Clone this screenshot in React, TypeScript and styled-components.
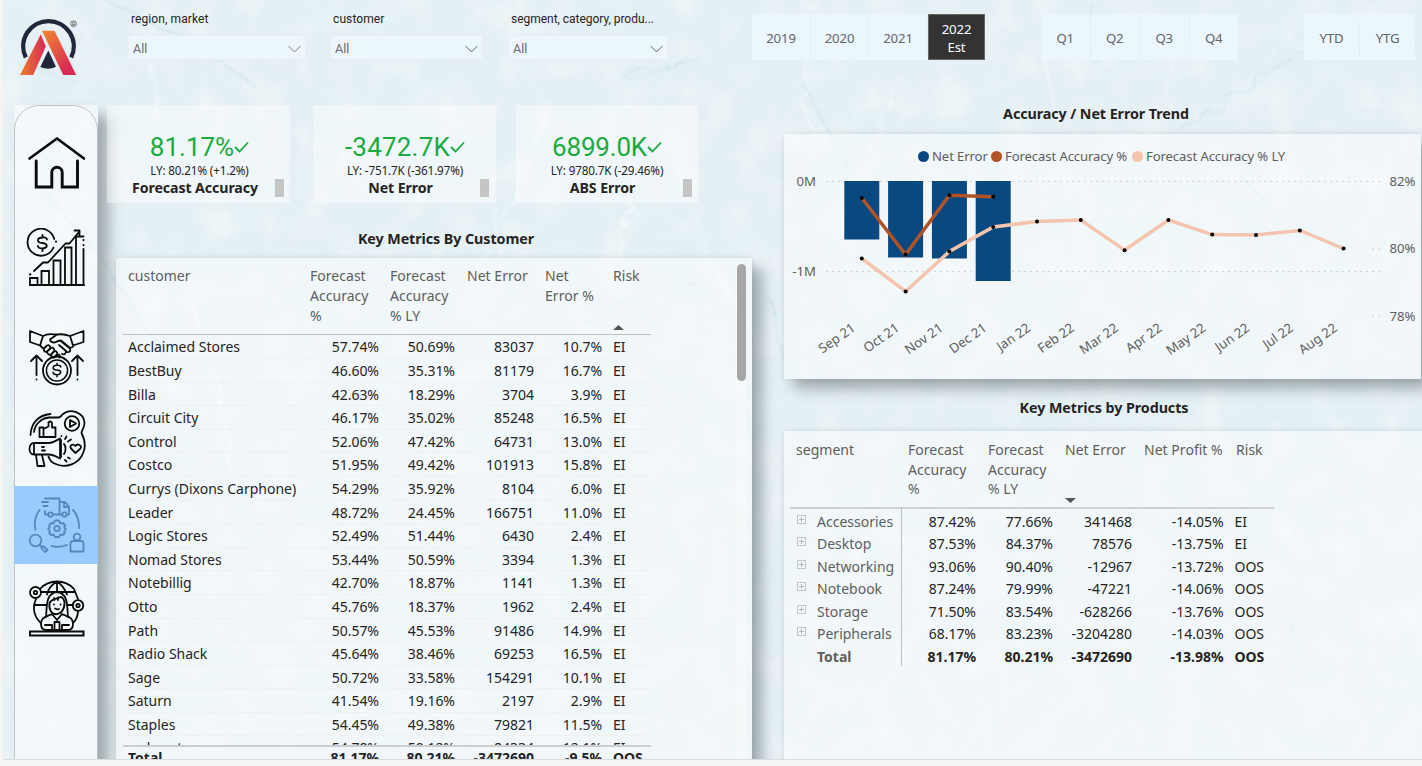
import React from "react";
import styled, { createGlobalStyle } from "styled-components";

const Global = createGlobalStyle`
  * { box-sizing: border-box; }
  body { margin: 0; background: #f3f3f3; }
`;

const UI = '"Noto Sans", "Open Sans", sans-serif';
const DIN = 'Roboto, "Liberation Sans", sans-serif';

const Page = styled.div`
  width: 1422px;
  height: 766px;
  overflow: hidden;
  background: #f4f4f4;
  font-family: ${UI};
  color: #252423;
`;
const Report = styled.div`
  position: relative;
  display: flex;
  width: 1419px;
  height: 760px;
  margin-left: 3px;
  overflow: hidden;
  background: #e5f0f4;
  border-bottom: 1px solid #dcdcdc;
`;
const Texture = styled.svg`
  position: absolute;
  inset: 0;
`;
const Rail = styled.div`
  position: relative;
  width: 95px;
  padding-left: 11px;
`;
const LogoBox = styled.div`
  height: 105px;
  padding-top: 14px;
`;
const Nav = styled.nav`
  position: relative;
  width: 84px;
  height: 655px;
  padding-top: 28px;
  background: rgba(255, 255, 255, 0.5);
  box-shadow: 11px 11px 13px rgba(40, 50, 55, 0.36);
  &::before {
    content: "";
    position: absolute;
    inset: 0 0 -40px 0;
    border: 1px solid #bfc3c6;
    border-radius: 25px;
    pointer-events: none;
  }
`;
const NavItem = styled.div<{ $gap?: number; $on?: boolean }>`
  position: relative;
  display: flex;
  justify-content: center;
  padding: ${(p) => (p.$on ? 9 : 0)}px 0;
  margin-top: ${(p) => p.$gap ?? 0}px;
  background: ${(p) => (p.$on ? "#99cbff" : "transparent")};
  svg { display: block; fill: none; stroke: ${(p) => (p.$on ? "#5389bf" : "#0b0b0b")}; stroke-width: 1.8; }
`;
const Middle = styled.div`
  position: relative;
  width: 654px;
  padding-left: 9px;
`;
const Right = styled.div`
  position: relative;
  width: 670px;
`;
const Slicers = styled.div`
  display: flex;
  height: 105px;
  padding: 12px 0 0 21px;
`;
const Slicer = styled.div<{ $w: number; $gap: number }>`
  width: ${(p) => p.$w}px;
  margin-right: ${(p) => p.$gap}px;
`;
const SlicerLabel = styled.div<{ $ls?: number }>`
  height: 23px;
  padding-left: 3px;
  font: 12px/14px ${DIN};
  letter-spacing: ${(p) => p.$ls ?? 0.1}px;
  white-space: nowrap;
`;
const Select = styled.div`
  display: flex;
  align-items: center;
  justify-content: space-between;
  height: 25px;
  padding: 2px 4px 0 4px;
  background: #ebf6fd;
  border: 1px solid #e9edf0;
  font: 12.6px/15px ${DIN};
  color: #6c6c6c;
`;
const Cards = styled.div`
  display: flex;
  height: 98px;
`;
const Card = styled.div<{ $w: number; $gap?: number }>`
  position: relative;
  width: ${(p) => p.$w}px;
  height: 98px;
  margin-right: ${(p) => p.$gap ?? 0}px;
  background: rgba(255, 255, 255, 0.42);
`;
const CardBody = styled.div<{ $w: number }>`
  display: flex;
  flex-direction: column;
  align-items: center;
  width: ${(p) => p.$w}px;
  padding-top: 26px;
  white-space: nowrap;
`;
const Value = styled.div<{ $ls?: number }>`
  display: flex;
  align-items: center;
  height: 32px;
  font: 26px/32px ${DIN};
  letter-spacing: ${(p) => p.$ls ?? 0}px;
  color: #1aab40;
`;
const Compare = styled.div`
  font-size: 11.7px;
  line-height: 15px;
  letter-spacing: -0.15px;
`;
const CardName = styled.div`
  margin-left: -9px;
  font-size: 14.2px;
  line-height: 20px;
  font-weight: 700;
  letter-spacing: -0.1px;
`;
const Thumb = styled.i<{ $x: number }>`
  position: absolute;
  left: ${(p) => p.$x}px;
  top: 74px;
  width: 9px;
  height: 18px;
  background: #c5c5c5;
`;
const Heading = styled.h2<{ $h: number; $pad: number; $c: number }>`
  margin: 0;
  width: ${(p) => p.$c * 2}px;
  height: ${(p) => p.$h}px;
  padding-top: ${(p) => p.$pad}px;
  text-align: center;
  font-size: 14.3px;
  line-height: 20px;
  font-weight: 700;
  letter-spacing: -0.07px;
`;
const Panel = styled.section<{ $w: number; $h: number }>`
  position: relative;
  width: ${(p) => p.$w}px;
  height: ${(p) => p.$h}px;
  background: rgba(255, 255, 255, 0.46);
  box-shadow: 10px 10px 13px rgba(40, 50, 55, 0.36), 0 0 5px rgba(60, 80, 90, 0.12);
`;
const CustomerPanel = styled(Panel)`
  margin-left: 9px;
  padding-left: 7px;
  overflow: visible;
`;
const Row = styled.div<{ $cols: string; $h: number; $bold?: boolean }>`
  display: grid;
  grid-template-columns: ${(p) => p.$cols};
  height: ${(p) => p.$h}px;
  line-height: ${(p) => p.$h}px;
  font-size: 14px;
  font-weight: ${(p) => (p.$bold ? 700 : 400)};
  white-space: nowrap;
`;
const CustRow = styled(Row)`
  width: 528px;
  padding-left: 5px;
  border-bottom: 1px solid #f1efef;
`;
const CustHead = styled(Row)`
  width: 528px;
  height: 77px;
  padding: 8px 0 0 5px;
  line-height: 20px;
  color: #605e5c;
  border-bottom: 1px solid #c4bebd;
`;
const CustBody = styled.div`
  height: 410px;
  padding-top: 0.4px;
  overflow: hidden;
`;
const CustTotal = styled(CustRow)`
  line-height: 21px;
  border-top: 2px solid #cbcdce;
  border-bottom: 0;
  overflow: hidden;
`;
const Num = styled.span`
  text-align: right;
  letter-spacing: -0.02px;
`;
const Name = styled.span`
  letter-spacing: 0;
`;
const RiskCell = styled.span`
  padding-left: 11px;
  letter-spacing: -0.05px;
`;
const HeadCell = styled.span<{ $indent?: number }>`
  position: relative;
  padding-left: ${(p) => p.$indent ?? 0}px;
  letter-spacing: 0.03px;
  white-space: pre;
`;
const SortMark = styled.svg<{ $top: number }>`
  position: absolute;
  left: 0;
  top: ${(p) => p.$top}px;
  fill: #555;
`;
const ScrollTrack = styled.div`
  position: absolute;
  left: 620px;
  top: 5px;
  width: 10px;
  height: 500px;
  background: rgba(255, 255, 255, 0.25);
  &::before {
    content: "";
    display: block;
    width: 9px;
    height: 117px;
    margin: 1px 0 0 1px;
    border-radius: 5px;
    background: #a6a6a6;
  }
`;
const Periods = styled.div`
  display: flex;
  height: 99px;
  padding-top: 14px;
`;
const PeriodGroup = styled.div<{ $gap?: number }>`
  display: flex;
  gap: 1px;
  margin-left: ${(p) => p.$gap ?? 0}px;
`;
const Period = styled.div<{ $w: number; $on?: boolean }>`
  display: flex;
  align-items: center;
  justify-content: center;
  width: ${(p) => p.$w}px;
  height: 46px;
  padding-top: 1px;
  text-align: center;
  font-size: 13.2px;
  line-height: 18px;
  letter-spacing: -0.15px;
  white-space: pre;
  color: ${(p) => (p.$on ? "#fff" : "#666")};
  background: ${(p) => (p.$on ? "#333" : "#ebf6fd")};
  border: ${(p) => (p.$on ? "1px solid #666" : "0")};
`;
const RightPanel = styled(Panel)`
  margin-left: 32px;
`;
const Legend = styled.div`
  display: flex;
  align-items: center;
  gap: 4px;
  height: 36px;
  padding: 8px 0 0 134px;
  font-size: 13.1px;
  letter-spacing: -0.1px;
  color: #605e5c;
  white-space: nowrap;
`;
const LegendItem = styled.span<{ $color: string; $w: number }>`
  display: flex;
  align-items: center;
  gap: 3px;
  width: ${(p) => p.$w}px;
  &::before {
    content: "";
    flex: none;
    width: 11px;
    height: 11px;
    border-radius: 50%;
    background: ${(p) => p.$color};
  }
`;
const Plot = styled.svg`
  display: block;
  font-family: ${UI};
  font-size: 13.2px;
  fill: #605e5c;
`;
const ProdPanel = styled(RightPanel)`
  padding-left: 6px;
`;
const ProdHead = styled(Row)`
  width: 484px;
  height: 78px;
  padding-top: 9px;
  line-height: 19.5px;
  color: #605e5c;
  border-bottom: 2px solid #cfd0d0;
`;
const ProdBody = styled.div`
  position: relative;
  width: 484px;
  padding-top: 1.6px;
  &::before {
    content: "";
    position: absolute;
    left: 111px;
    top: -1px;
    width: 1px;
    height: 158px;
    background: #bfc0c0;
  }
`;
const SegCell = styled.span`
  display: flex;
  gap: 11px;
  padding-left: 7px;
  color: #605e5c;
`;
const Expand = styled.i<{ $hide?: boolean }>`
  position: relative;
  width: 9px;
  height: 9px;
  margin-top: 4px;
  visibility: ${(p) => (p.$hide ? "hidden" : "visible")};
  border: 1px solid #c2c5c7;
  &::before, &::after {
    content: "";
    position: absolute;
    background: #b4b7b9;
  }
  &::before { left: 1px; top: 3px; width: 5px; height: 1px; }
  &::after { left: 3px; top: 1px; width: 1px; height: 5px; }
`;

const CUST_COLS = "178px 73px 76px 79px 68px 1fr";
const CUST_HEAD_COLS = "182px 80px 77px 78px 68px 1fr";
const customers = `Acclaimed Stores|57.74%|50.69%|83037|10.7%
BestBuy|46.60%|35.31%|81179|16.7%
Billa|42.63%|18.29%|3704|3.9%
Circuit City|46.17%|35.02%|85248|16.5%
Control|52.06%|47.42%|64731|13.0%
Costco|51.95%|49.42%|101913|15.8%
Currys (Dixons Carphone)|54.29%|35.92%|8104|6.0%
Leader|48.72%|24.45%|166751|11.0%
Logic Stores|52.49%|51.44%|6430|2.4%
Nomad Stores|53.44%|50.59%|3394|1.3%
Notebillig|42.70%|18.87%|1141|1.3%
Otto|45.76%|18.37%|1962|2.4%
Path|50.57%|45.53%|91486|14.9%
Radio Shack|45.64%|38.46%|69253|16.5%
Sage|50.72%|33.58%|154291|10.1%
Saturn|41.54%|19.16%|2197|2.9%
Staples|54.45%|49.38%|79821|11.5%
walmart|54.78%|50.12%|84334|12.1%`
  .split("\n")
  .map((l) => l.split("|"));

const PROD_COLS = "112px 74px 77px 79px 91.5px 1fr";
const PROD_HEAD_COLS = "118px 80px 77px 79px 92px 1fr";
const products = [
  ["Accessories", "87.42%", "77.66%", "341468", "-14.05%", "EI"],
  ["Desktop", "87.53%", "84.37%", "78576", "-13.75%", "EI"],
  ["Networking", "93.06%", "90.40%", "-12967", "-13.72%", "OOS"],
  ["Notebook", "87.24%", "79.99%", "-47221", "-14.06%", "OOS"],
  ["Storage", "71.50%", "83.54%", "-628266", "-13.76%", "OOS"],
  ["Peripherals", "68.17%", "83.23%", "-3204280", "-14.03%", "OOS"],
  ["Total", "81.17%", "80.21%", "-3472690", "-13.98%", "OOS"],
];

const months = ["Sep 21", "Oct 21", "Nov 21", "Dec 21", "Jan 22", "Feb 22", "Mar 22", "Apr 22", "May 22", "Jun 22", "Jul 22", "Aug 22"];
const lastYear = [258.5, 291.5, 251.5, 227, 221.5, 220, 250.2, 220, 234.6, 235, 230.5, 248.5];
const accuracy = [198, 254.5, 195.2, 196.7];
const bars = [239.5, 257.5, 258.5, 281];
const px = (i: number) => 861.8 + i * 43.8;
const line = (v: number[]) => v.map((y, i) => `${px(i)},${y}`).join(" ");

const Chevron = ({ color = "#666" }: { color?: string }) => (
  <svg width="13" height="8" viewBox="0 0 13 8" fill="none" stroke={color} strokeWidth="1">
    <path d="M.500 1l6 6 6-6" />
  </svg>
);
const Check = () => (
  <svg width="15" height="14" viewBox="0 0 15 14" fill="none" stroke="#1aab40" strokeWidth="1.8">
    <path d="M1 7l4.500 4.500L14 2.500" />
  </svg>
);

const Ice = () => (
  <Texture width="1419" height="760" viewBox="3 0 1419 760">
    <defs>
      <filter id="frost" x="0" y="0" width="100%" height="100%">
        <feTurbulence type="fractalNoise" baseFrequency="0.009 0.011" numOctaves="7" seed="11" />
        <feColorMatrix values="0 0 0 0 0.74  0 0 0 0 0.87  0 0 0 0 0.91  1.7 0 0 0 -0.72" />
      </filter>
      <filter id="snow" x="0" y="0" width="100%" height="100%">
        <feTurbulence type="fractalNoise" baseFrequency="0.03 0.025" numOctaves="5" seed="4" />
        <feColorMatrix values="0 0 0 0 1  0 0 0 0 1  0 0 0 0 1  0 2 0 0 -0.9" />
      </filter>
      <filter id="soft" x="-5%" y="-5%" width="110%" height="110%">
        <feTurbulence type="fractalNoise" baseFrequency="0.04" numOctaves="3" seed="8" result="n" />
        <feDisplacementMap in="SourceGraphic" in2="n" scale="18" />
        <feGaussianBlur stdDeviation="0.8" />
      </filter>
    </defs>
    <rect x="3" width="1419" height="760" filter="url(#frost)" opacity="0.6" />
    <rect x="3" width="1419" height="760" filter="url(#snow)" opacity="0.4" />
    <g fill="none" filter="url(#soft)">
      <path
        stroke="#fff" strokeOpacity="0.55" strokeWidth="1.4"
        d="M150 62l14 62 22 50M548 100l-38 118-14 50M640 110l-22 160M795 20l14 40-9 44 14 30M1042 44l16 82M1172 30l-8 92M903 75l-37 84M700 240l60 110M1262 60l30-26M190 300l30 90 10 80M500 210l-52 150"
      />
      <path
        stroke="#b0d6e4" strokeOpacity="0.5" strokeWidth="1.2"
        d="M18 65l60 16M106 0l90 44 60 43M620 78l75-20M800 80l50 90M1080 38l14 22M1180 128l54-32 62-42 50 4M1090 2l5 20M30 175l70 80 50 80 38 52M580 320l126-44M1240 176l30 30M1290 620l8 24M770 300l14 60"
      />
    </g>
  </Texture>
);

const Logo = () => (
  <svg width="64" height="66" viewBox="14 14 64 66">
    <defs>
      <linearGradient id="legL" x1="0" x2="1">
        <stop offset="0.15" stopColor="#ea7431" />
        <stop offset="0.9" stopColor="#d92f52" />
      </linearGradient>
      <linearGradient id="legR" x1="0" y1="0" x2="0.8" y2="1">
        <stop offset="0.1" stopColor="#ee7f33" />
        <stop offset="0.9" stopColor="#d92a55" />
      </linearGradient>
    </defs>
    <path d="M25.800 57.500A25.300 25.300 0 1 1 71.200 57.500" fill="none" stroke="#21263a" strokeWidth="4.300" />
    <path d="M40.800 34.300L45.800 46.500 33.200 75H20z" fill="url(#legL)" />
    <path d="M42 30.700H54.500L76.200 75H63.200z" fill="url(#legR)" />
    <path d="M48.300 50.500L56 66.800Q48.500 70.500 40.300 67z" fill="#21263a" />
    <circle cx="73.500" cy="23.700" r="2.900" fill="none" stroke="#444" strokeWidth="0.700" />
    <text x="71.900" y="25.700" fontSize="5" fontFamily="Roboto" fill="#333">R</text>
  </svg>
);

const Icon = ({ y, children }: { y: number; children: React.ReactNode }) => (
  <svg width="60" height="60" viewBox={`26 ${y} 60 60`} strokeLinejoin="round" strokeLinecap="round">{children}</svg>
);

const Dollar = ({ x, y, s = 1 }: { x: number; y: number; s?: number }) => (
  <path transform={`translate(${x} ${y}) scale(${s})`} d="M4.500-3.500C4-6 1.500-5.500 0-5.500c-3 0-4.500 1-4.500 2.800C-4.500 1-.500-.500 2 .300 5.500 1.500 5 5.500 0 5.500c-3 0-4.500-1-4.600-2.700M0-8v2.500M0 5.500V8" />
);

const HomeIcon = () => (
  <Icon y={133}>
    <path strokeWidth="2.7" d="M29.500 158.500L57 138.500 84 158.500" />
    <path strokeWidth="2.9" strokeLinejoin="miter" d="M36.200 161v26h15.600v-14.500a5.200 5.200 0 0 1 10.400 0V187h15.300V161" />
  </Icon>
);
const GrowthIcon = () => (
  <Icon y={228}>
    <path d="M54.200 239a13.500 13.500 0 1 0-.700 8.500" />
    <Dollar x={42.500} y={243} />
    <path d="M34 271l9-8.500h5L65.500 243.500h4L79 232M74.500 230.500h5v5" />
    <path d="M30 274.500l.300-.300M56 241.500v.100M83.500 240v.100M83.500 245v.100" strokeWidth="2.200" />
    <path strokeLinejoin="miter" d="M30 285v-7h7.500v7M41.500 285v-14h7.500v14M53.500 285V260.500H60.500V285M65 285V247.500H71.500V285M76 285V236.500h7.500M83.500 249V285" />
    <path strokeWidth="2" d="M30 285h54" />
  </Icon>
);
const DealIcon = () => (
  <Icon y={327}>
    <path d="M30 331l13 5-3 9.500-10-3.500zM83.500 331l-13.500 5 3 9.500 10.500-3.500zM43 336c5-3 10-1.500 13-1.500M70 336c-5-2-9-2-13-1.500l-7 5c1 4 5 3.500 8 1.500l3-.500 9 7.500c4-1 4-3 3-3.500M40 345.500l4 3.500M62 342l8 6.500c1 3-1 4-3 3.500M59 345l7 6c0 3-2 4-4 3M44 348.500l3-3c2-1 4 1 3 3l-3 3c-2 1-4-1-3-3M47 351.500l4-3.500c2-1 4 1 3 3l-3 3.500c-2 1-4-1-4-3M51 354.500l3-3c2-1 4 1 3 3l-3 3c-2 0-3-1-3-3M55 357l2.500-2.500c2 0 3 1 2 3" />
    <circle cx="57" cy="370.500" r="14" />
    <circle cx="57" cy="370.500" r="10.600" strokeWidth="1.500" />
    <Dollar x={57} y={370} s={0.85} />
    <path d="M36.500 375v-19.500M31 361l5.500-5.500 5.500 5.500M36.500 379.500v.100M77.500 375v-19.500M72 361l5.500-5.500 5.500 5.500M77.500 379.500v.100" />
  </Icon>
);
const PromoIcon = () => (
  <Icon y={409}>
    <path d="M30.500 435c.500-12 8-20 20-21M34 432c1-8 7-13.500 15-14.500h9c3 0 3-2 5-3.500 7-6 21-2 21.500 9 0 5-3 7-3 10 4 8 4 14 2 19-4 12-18 17-29 11.500-3-1-5-4-6-7" />
    <circle cx="72" cy="423.500" r="7.300" />
    <path d="M70 420l6 3.500-6 3.500z" />
    <path d="M39.500 427.500h4v9.500h-4zM43.500 429l5-2.500v-4c2-2 4-.500 3.500 2v3h3.500v9.500h-12" />
    <path d="M49 443h-15c-6 0-6 11.500 0 11.500h15c4 0 7 2 11 4v-20c-4 2-7 4.500-11 4.500zM34 443v11.500M61 440v17M64 444c2 2 2 8 0 10M36 455l1.500 11h7L42 455M42 447h2M42 450.500h3" />
    <path d="M75.500 453l-4.500-4.500c-2-3 2-5.500 4.500-2.500 2-3 7-.500 5 2.500zM65 439l1.500-2.500M68 441.500l3-2M65 460l1.500 1.500M68 457.500l2 1M61.500 436v.100" />
  </Icon>
);
const SupplyIcon = () => (
  <Icon y={495}>
    <path d="M45 498.500h14.500v16H54M45 511v3.500h2.500M42 502h6M43.500 506h4M59.500 502H65l4 5v7.500h-2.500M59.500 514.500H62M64 502v5h5" />
    <circle cx="50.500" cy="514.500" r="2.200" />
    <circle cx="64.500" cy="514.500" r="2.200" />
    <path d="M39.500 510c-4 5-6 13-4 20M73 510c4 4 6 11 6.200 18M51.500 546c5 1.500 10 1 15.500-1" />
    <path strokeWidth="1.900" d="M54.500 521.500l1.200-1h2.600l1.200 1 1 2 2.500-.500 1.800 2-.500 2.500 1.500 1.500-1.500 2 .500 2-2 2-2.300-.500-1.500 2.500h-4l-1.500-2.500-2.500.500-1.800-2 .500-2-1.500-2 1.500-1.500-.500-2.500 2-2 2.300.500z" />
    <circle cx="57" cy="528.500" r="2.700" />
    <circle cx="35.500" cy="540.500" r="5.800" />
    <path d="M39.500 545l2.500 2.200M43 546l4.500 4-2.500 2-3.800-4z" />
    <circle cx="77" cy="537" r="3.400" />
    <path d="M70.500 551.500v-8q0-2.500 2.500-2.500h8q2.500 0 2.500 2.500v8z" />
  </Icon>
);
const ExecIcon = () => (
  <Icon y={579}>
    <path d="M40 589c9-10 25-10 34 0l4 10M36 599c-4 9-2 18 5 24M78 611c0 5-2 9-5 12M57 581.500v10M57 581.500c-5 3-9 8-10 13M57 581.500c5 3 8 8 10 13M41 592h33M34 605h12M67 605h6" />
    <circle cx="35.500" cy="592.500" r="5.500" />
    <circle cx="35.500" cy="592.500" r="1.700" />
    <circle cx="78" cy="605.500" r="5.300" />
    <circle cx="78" cy="605.500" r="1.700" />
    <path d="M46 617c1-8-1-24 11-25 12 1 10 17 11 25M49.500 603c-2 15 15 15 15 0 0-3-2-6-4-6-3 2-8 1-11 6zM54 598l.500 2M58 597.500v2.500M55 608.500c2 1 3 1 4 .500M54 604.500v.100M60.500 604.500v.100" />
    <path d="M52 614c-6 3-11 3-11 10 0 4 2 6 5 6h22c3 0 5-2 5-6 0-7-5-7-11-10M52 614l5 6 5-6M45 625h7v5M69 625h-7v5M54.500 622h5v8h-5z" />
    <path strokeWidth="2" strokeLinejoin="miter" d="M30 631.500h53.500v4H30z" />
  </Icon>
);

const App = () => (
  <Page>
    <Global />
    <Report>
      <Ice />
      <Rail>
        <LogoBox><Logo /></LogoBox>
        <Nav>
          <NavItem><HomeIcon /></NavItem>
          <NavItem $gap={35}><GrowthIcon /></NavItem>
          <NavItem $gap={39}><DealIcon /></NavItem>
          <NavItem $gap={22}><PromoIcon /></NavItem>
          <NavItem $gap={17} $on><SupplyIcon /></NavItem>
          <NavItem $gap={15}><ExecIcon /></NavItem>
        </Nav>
      </Rail>
      <Middle>
        <Slicers>
          <Slicer $w={178} $gap={24}><SlicerLabel>region, market</SlicerLabel><Select>All<Chevron color="#8a7d72" /></Select></Slicer>
          <Slicer $w={153} $gap={25}><SlicerLabel>customer</SlicerLabel><Select>All<Chevron /></Select></Slicer>
          <Slicer $w={160} $gap={0}><SlicerLabel $ls={-0.03}>segment, category, produ...</SlicerLabel><Select>All<Chevron /></Select></Slicer>
        </Slicers>
        <Cards>
          <Card $w={183} $gap={23}>
            <CardBody $w={185}>
              <Value>81.17%<Check /></Value>
              <Compare>LY: 80.21% (+1.2%)</Compare>
              <CardName>Forecast Accuracy</CardName>
            </CardBody>
            <Thumb $x={168} />
          </Card>
          <Card $w={183} $gap={20}>
            <CardBody $w={184}>
              <Value $ls={0.2}>-3472.7K<Check /></Value>
              <Compare>LY: -751.7K (-361.97%)</Compare>
              <CardName>Net Error</CardName>
            </CardBody>
            <Thumb $x={167} />
          </Card>
          <Card $w={182}>
            <CardBody $w={182}>
              <Value $ls={-0.2}>6899.0K<Check /></Value>
              <Compare>LY: 9780.7K (-29.46%)</Compare>
              <CardName>ABS Error</CardName>
            </CardBody>
            <Thumb $x={167} />
          </Card>
        </Cards>
        <Heading $h={55} $pad={26} $c={339}>Key Metrics By Customer</Heading>
        <CustomerPanel $w={636} $h={540}>
          <CustHead $cols={CUST_HEAD_COLS} $h={77}>
            <HeadCell>customer</HeadCell>
            <HeadCell>{"Forecast\nAccuracy\n%"}</HeadCell>
            <HeadCell>{"Forecast\nAccuracy\n% LY"}</HeadCell>
            <HeadCell>Net Error</HeadCell>
            <HeadCell>{"Net\nError %"}</HeadCell>
            <HeadCell>
              Risk
              <SortMark $top={59} width="11" height="5"><path d="M0 5L5.500 0 11 5z" /></SortMark>
            </HeadCell>
          </CustHead>
          <CustBody>
            {customers.map(([name, ...vals]) => (
              <CustRow key={name} $cols={CUST_COLS} $h={23.6}>
                <Name>{name}</Name>
                {vals.map((v, i) => <Num key={i}>{v}</Num>)}
                <RiskCell>EI</RiskCell>
              </CustRow>
            ))}
          </CustBody>
          <CustTotal $cols={CUST_COLS} $h={24} $bold>
            <Name>Total</Name>
            <Num>81.17%</Num>
            <Num>80.21%</Num>
            <Num>-3472690</Num>
            <Num>-9.5%</Num>
            <RiskCell>OOS</RiskCell>
          </CustTotal>
          <ScrollTrack />
        </CustomerPanel>
      </Middle>
      <Right>
        <Periods>
          <PeriodGroup>
            <Period $w={58}>2019</Period>
            <Period $w={57}>2020</Period>
            <Period $w={58}>2021</Period>
            <Period $w={57} $on>{"2022\nEst"}</Period>
          </PeriodGroup>
          <PeriodGroup $gap={56}>
            {["Q1", "Q2", "Q3", "Q4"].map((q) => <Period key={q} $w={48.5}>{q}</Period>)}
          </PeriodGroup>
          <PeriodGroup $gap={66}>
            <Period $w={55}>YTD</Period>
            <Period $w={55}>YTG</Period>
          </PeriodGroup>
        </Periods>
        <Heading $h={35} $pad={5} $c={344}>Accuracy / Net Error Trend</Heading>
        <RightPanel $w={637} $h={245}>
          <Legend>
            <LegendItem $color="#0a4880" $w={69}>Net Error</LegendItem>
            <LegendItem $color="#b05327" $w={137}>Forecast Accuracy %</LegendItem>
            <LegendItem $color="#f5c4af" $w={155}>Forecast Accuracy % LY</LegendItem>
          </Legend>
          <Plot width="637" height="209" viewBox="784 170 637 209">
            <path stroke="#c3c7c9" strokeDasharray="1.5 4.500" d="M826.500 181.500H1380M826.500 271.500H1380M1372.500 249H1380M1372.500 316.500H1380" />
            {bars.map((b, i) => (
              <rect key={i} x={px(i) - 17.500} y={181} width={35} height={b - 181} fill="#0a4880" />
            ))}
            <polyline points={line(accuracy)} fill="none" stroke="#b05327" strokeWidth="3.500" />
            <polyline points={line(lastYear)} fill="none" stroke="#f5c4af" strokeWidth="3.500" />
            {[lastYear, accuracy].map((s) => s.map((y, i) => <circle key={y + "-" + i} cx={px(i)} cy={y} r="2" fill="#000" />))}
            <text x="816" y="186" textAnchor="end">0M</text>
            <text x="816" y="276" textAnchor="end">-1M</text>
            <text x="1389.500" y="186">82%</text>
            <text x="1389.500" y="253">80%</text>
            <text x="1389.500" y="321">78%</text>
            {months.map((m, i) => (
              <text key={m} textAnchor="end" transform={`translate(${px(i) - 5.5} ${330}) rotate(-35)`}>{m}</text>
            ))}
          </Plot>
        </RightPanel>
        <Heading $h={52} $pad={19} $c={352}>Key Metrics by Products</Heading>
        <ProdPanel $w={650} $h={340}>
          <ProdHead $cols={PROD_HEAD_COLS} $h={78}>
            <HeadCell $indent={6}>segment</HeadCell>
            <HeadCell>{"Forecast\nAccuracy\n%"}</HeadCell>
            <HeadCell>{"Forecast\nAccuracy\n% LY"}</HeadCell>
            <HeadCell>
              Net Error
              <SortMark $top={58} width="11" height="5"><path d="M0 0L5.500 5 11 0z" /></SortMark>
            </HeadCell>
            <HeadCell>Net Profit %</HeadCell>
            <HeadCell>Risk</HeadCell>
          </ProdHead>
          <ProdBody>
            {products.map(([seg, ...vals]) => (
              <Row key={seg} $cols={PROD_COLS} $h={22.5} $bold={seg === "Total"}>
                <SegCell><Expand $hide={seg === "Total"} />{seg}</SegCell>
                {vals.slice(0, 4).map((v, i) => <Num key={i}>{v}</Num>)}
                <RiskCell>{vals[4]}</RiskCell>
              </Row>
            ))}
          </ProdBody>
        </ProdPanel>
      </Right>
    </Report>
  </Page>
);

export default App;
